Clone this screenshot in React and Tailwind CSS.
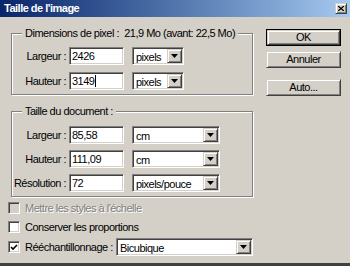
const sunken =
  'border border-t-[#808080] border-l-[#808080] border-b-white border-r-white shadow-[inset_1px_1px_0_#404040,inset_-1px_-1px_0_#d4d0c8]';
const raised =
  'border border-t-[#d4d0c8] border-l-[#d4d0c8] border-b-[#404040] border-r-[#404040] shadow-[inset_1px_1px_0_#fff,inset_-1px_-1px_0_#808080] bg-[#d4d0c8]';

function Arrow() {
  return (
    <svg width="7" height="4" viewBox="0 0 7 4">
      <path d="M0 0h7L3.5 4z" fill="#000" />
    </svg>
  );
}

function Field({ value, caret }) {
  return (
    <div className={`w-[55px] h-[18px] bg-white flex items-center pl-[2px] ${sunken}`}>
      <span>{value}</span>
      {caret && <span className="w-px h-[12px] bg-black ml-px" />}
    </div>
  );
}

function Select({ value, className }) {
  return (
    <div className={`h-[18px] bg-white flex items-center ${sunken} ${className}`}>
      <span className="flex-1 pl-[3px] pt-[2px]">{value}</span>
      <div className={`w-[15px] h-[14px] mr-px flex items-center justify-center ${raised}`}>
        <Arrow />
      </div>
    </div>
  );
}

function Row({ label, value, unit, caret, selectClass }) {
  return (
    <div className="flex items-center">
      <div className="w-[57px] text-right pr-[3px] whitespace-nowrap">{label}</div>
      <Field value={value} caret={caret} />
      <Select value={unit} className={`ml-[8px] ${selectClass}`} />
    </div>
  );
}

function Group({ title, className, children }) {
  return (
    <div
      className={`relative w-[242px] ml-[3px] border border-[#808080] shadow-[inset_1px_1px_0_#fff,1px_1px_0_#fff] ${className}`}
    >
      <span className="absolute left-[10px] -top-[7px] px-[3px] bg-[#d4d0c8] leading-[13px] whitespace-pre">
        {title}
      </span>
      {children}
    </div>
  );
}

function Check({ checked, disabled }) {
  return (
    <div
      className={`w-[12px] h-[12px] flex items-center justify-center ${sunken} ${
        disabled ? 'bg-[#d4d0c8]' : 'bg-white'
      }`}
    >
      {checked && (
        <svg width="8" height="7" viewBox="0 0 8 7">
          <path d="M1 3l2 2 4-4" stroke="#000" strokeWidth="1.6" fill="none" />
        </svg>
      )}
    </div>
  );
}

function Button({ label, isDefault, className }) {
  if (isDefault) {
    return (
      <div className={`w-[75px] h-[17px] border border-black ${className}`}>
        <div className={`w-full h-full flex items-center justify-center ${raised}`}>{label}</div>
      </div>
    );
  }
  return (
    <div className={`w-[75px] h-[17px] flex items-center justify-center ${raised} ${className}`}>
      {label}
    </div>
  );
}

export default function App() {
  return (
    <div className="w-[350px] h-[266px] bg-[#d4d0c8] flex flex-col overflow-hidden border-b-[3px] border-[#404040] font-['Tahoma','Liberation_Sans',Arial,sans-serif] text-[11px] tracking-[-0.5px] text-black leading-[13px]">
      <div className="h-[17px] shrink-0 bg-linear-to-r from-[#0a246a] to-[#a6caf0] flex items-center justify-between pl-[4px] pr-[3px]">
        <span className="text-white font-bold">Taille de l'image</span>
        <div className={`w-[12px] h-[11px] flex items-center justify-center ${raised}`}>
          <svg width="6" height="5" viewBox="0 0 6 5">
            <path d="M0 0l6 5M6 0L0 5" stroke="#000" strokeWidth="1.3" />
          </svg>
        </div>
      </div>

      <div className="flex flex-1">
        <div className="w-[258px] pl-[8px] pt-[16px] flex flex-col">
          <Group title="Dimensions de pixel :  21,9 Mo (avant: 22,5 Mo)" className="h-[62px] pt-[13px]">
            <div className="flex flex-col gap-[7px]">
              <Row label="Largeur :" value="2426" unit="pixels" selectClass="w-[52px]" />
              <Row label="Hauteur :" value="3149" unit="pixels" caret selectClass="w-[52px]" />
            </div>
          </Group>

          <Group title="Taille du document :" className="h-[86px] mt-[16px] pt-[14px]">
            <div className="flex flex-col gap-[6px]">
              <Row label="Largeur :" value="85,58" unit="cm" selectClass="w-[88px]" />
              <Row label="Hauteur :" value="111,09" unit="cm" selectClass="w-[88px]" />
              <Row label="Résolution :" value="72" unit="pixels/pouce" selectClass="w-[88px]" />
            </div>
          </Group>

          <div className="flex items-center h-[12px] mt-[5px]">
            <Check disabled />
            <span className="ml-[5px] text-[#808080] [text-shadow:1px_1px_0_#fff]">
              Mettre les styles à l'échelle
            </span>
          </div>
          <div className="flex items-center h-[12px] mt-[7px]">
            <Check />
            <span className="ml-[5px]">Conserver les proportions</span>
          </div>
          <div className="flex items-center h-[18px] mt-[5px]">
            <Check checked />
            <span className="ml-[5px] w-[91px] whitespace-nowrap">Rééchantillonnage :</span>
            <Select value="Bicubique" className="w-[137px]" />
          </div>
        </div>

        <div className="pl-[8px] pt-[12px] flex flex-col">
          <Button label="OK" isDefault />
          <Button label="Annuler" className="mt-[5px]" />
          <Button label="Auto..." className="mt-[11px]" />
        </div>
      </div>
    </div>
  );
}
